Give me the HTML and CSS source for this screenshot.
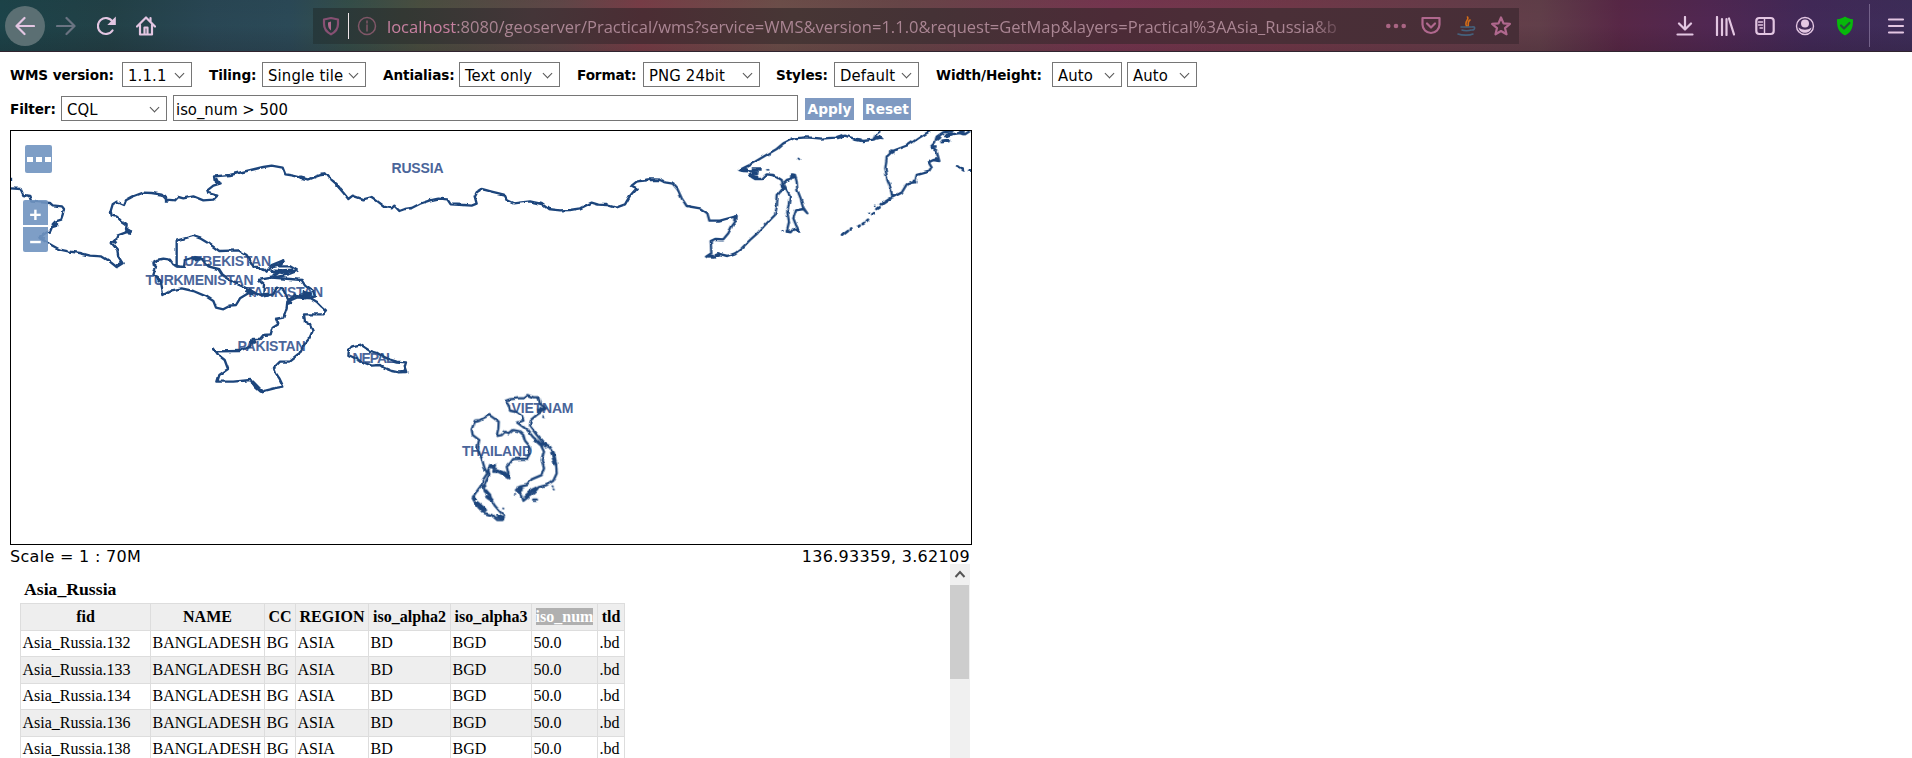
FILE: index.html
```html
<!DOCTYPE html>
<html lang="en">
<head>
<meta charset="utf-8">
<title>OpenLayers map preview</title>
<link rel="stylesheet" href="styles.css">
</head>
<body>
<header class="chrome">
  <nav class="nav">
    <span class="back"><svg class="icon" viewBox="0 0 20 20"><path d="M19 10H2M9.500 2L1.500 10l8 8" /></svg></span>
    <svg class="icon forward" viewBox="0 0 20 20"><path d="M1 10h17M10.500 2l8 8-8 8"/></svg>
    <svg class="icon reload" viewBox="0 0 20 20"><path d="M15.500 14.500A8 8 0 1 1 15.500 5.500"/><path class="solid" d="M18.800 0.500v8.500h-8.500z"/></svg>
    <svg class="icon home" viewBox="0 0 20 20"><path d="M1 10.500L10 1.500l9 9M4 9v9.500h12V9"/><path d="M8.500 18v-6.500h3V18M14.500 2v3"/></svg>
  </nav>
  <div class="urlbar">
    <svg class="icon shield" viewBox="0 0 20 20"><path d="M3 3.500L10 2l7 1.500V8c0 5-2.500 8-7 10.300C5.500 16 3 13 3 8z"/><path class="solid" d="M7 6.500l3-1v9c-2-1.500-3-3.500-3-6z"/></svg>
    <span class="caret"></span>
    <svg class="icon info" viewBox="0 0 20 20"><circle cx="10" cy="10" r="8.500"/><path d="M10 9v6M10 5v2"/></svg>
    <span class="url"><span class="host">localhost</span>:8080/geoserver/Practical/wms?service=WMS&amp;version=1.1.0&amp;request=GetMap&amp;layers=Practical%3AAsia_Russia&amp;b</span>
    <svg class="icon dots" viewBox="0 0 20 20"><circle cx="2.300" cy="10" r="2.300"/><circle cx="10" cy="10" r="2.300"/><circle cx="17.700" cy="10" r="2.300"/></svg>
    <svg class="icon pocket" viewBox="0 0 20 20"><path d="M1.500 2h17v6.500a8.500 8.500 0 0 1-17 0z"/><path d="M6 7.500l4 4 4-4"/></svg>
    <svg class="icon java" viewBox="0 0 20 20"><path class="flame" d="M10.500 1c2 3-3.500 4-1 9M13 4c-3 2-1 3-2 6"/><path class="cup" d="M4 11h11M5 14c2 1 7 1 9 0M1 18c4 1.500 12 1.500 15 0M15 11c4-1 3 3 0 3"/></svg>
    <svg class="icon star" viewBox="0 0 20 20"><path d="M10 1.500l2.500 5.900 6.400.5-4.900 4.200 1.500 6.200L10 15l-5.500 3.300L6 12.100 1.100 7.900l6.400-.5z"/></svg>
  </div>
  <nav class="tools">
    <svg class="icon" viewBox="0 0 20 20"><path d="M10 1v12M4 7.500l6 6 6-6M2.500 18.500h15"/></svg>
    <svg class="icon" viewBox="0 0 20 20"><path d="M2 1v18M7 3v16M11.500 3v16M14 2.500l5 16"/></svg>
    <svg class="icon" viewBox="0 0 20 20"><rect x="1.300" y="2" width="17.400" height="16" rx="3"/><path class="thin" d="M9.500 2v16M3.500 6h4M3.500 9h4M5 12h2.500"/></svg>
    <svg class="icon" viewBox="0 0 20 20"><circle class="thin" cx="10" cy="10" r="8.500"/><circle class="solid" cx="10" cy="7.500" r="4"/><path class="solid" d="M3.500 11.500c4 3 9 3 13 0-1 7-12 7-13 0z"/></svg>
    <svg class="icon guard" viewBox="0 0 20 20"><path class="leaf" d="M10 .5c2 1.500 5 2.500 8 2.700 0 7-.5 12.500-8 16.300C2.500 15.700 2 10 2 3.200c3-.2 6-1.200 8-2.700z"/><path class="tick" d="M6 9.500l3 3 5.500-5.500"/></svg>
    <span class="divider"></span>
    <svg class="icon" viewBox="0 0 20 20"><path d="M3 3.500h14M3 10h14M3 16.500h14"/></svg>
  </nav>
</header>

<main class="page">
  <form class="row options">
    <label class="w-version">WMS version:</label><span class="select s-version">1.1.1</span>
    <label class="w-tiling">Tiling:</label><span class="select s-tiling">Single tile</span>
    <label class="w-alias">Antialias:</label><span class="select s-alias">Text only</span>
    <label class="w-format">Format:</label><span class="select s-format">PNG 24bit</span>
    <label class="w-styles">Styles:</label><span class="select s-styles">Default</span>
    <label class="w-size">Width/Height:</label><span class="select s-auto">Auto</span><span class="select s-auto second">Auto</span>
  </form>
  <form class="row filter">
    <label class="w-filter">Filter:</label><span class="select s-filter">CQL</span>
    <span class="query">iso_num &gt; 500</span>
    <a class="button apply">Apply</a><a class="button reset">Reset</a>
  </form>

  <section class="map">
    <svg class="layer" viewBox="11 131 960 413">
      <defs>
        <filter id="coast" filterUnits="userSpaceOnUse" x="11" y="131" width="960" height="413">
          <feTurbulence type="fractalNoise" baseFrequency="0.15" numOctaves="1" seed="4" result="noise"/>
          <feDisplacementMap in="SourceGraphic" in2="noise" scale="3.500" xChannelSelector="R" yChannelSelector="G"/>
        </filter>
      </defs>
      <g class="names">
        <text x="391.500" y="173" textLength="52">RUSSIA</text>
        <text x="184" y="266" textLength="87">UZBEKISTAN</text>
        <text x="145.500" y="284.500" textLength="108">TURKMENISTAN</text>
        <text x="246" y="296.500" textLength="77">TAJIKISTAN</text>
        <text x="237.500" y="350.500" textLength="68">PAKISTAN</text>
        <text x="352.500" y="362.500" textLength="42">NEPAL</text>
        <text x="511.500" y="412.500" textLength="62">VIETNAM</text>
        <text x="462" y="456" textLength="70">THAILAND</text>
      </g>
      <g filter="url(#coast)">
      <g class="border" transform="translate(0 125) scale(.33333)">
        <path d="M33 158v10M33 190L62 192 70 210 88 213 94 230 150 234 158 241 186 244 192 252 188 272 184 284 165 290 158 298 172 302 156 306 150 320 140 322 118 338 140 352 158 362 180 374 205 379 240 384 270 392 305 394 322 404 350 426 368 415 355 395 352 375 335 354 348 342 352 332 378 322 392 322 378 312 380 300 365 290 352 276 335 272 332 258 338 238 350 230 372 240 378 226 400 214 430 203 455 204 485 209 500 224 525 226 535 216 550 220 580 214 610 226 640 224 652 212 625 204 622 196 640 182 662 175 645 172 642 154 690 150 740 138 790 126 815 122 848 128 856 148 880 152 905 158 925 164 950 154 975 146 985 158 1005 172 1020 190"/>
        <path class="clump" d="M120 338l14 4M160 298l14 2M376 316l16 6M342 354l6-6M646 160l6 12 8 2M500 222v8M900 156l14 4M962 148l14-1"/>
        <path d="M530 424V347L580 333 600 340 630 358 658 378 715 376 740 390 752 410 762 428 790 430 800 440 815 420 850 406 838 424 870 424 893 437 870 446 850 452 815 458 775 465 792 480 790 505 780 512 745 492"/>
        <path d="M530 424L552 426 555 405 585 396 605 402 625 424 655 432 668 452 700 472 745 492 765 505"/>
        <path d="M455 414L470 405 490 401 510 404 520 418 540 426M455 414L468 425 460 450 482 468 486 488 490 510 515 496 545 490 580 498 620 515 640 528 648 548 670 553 690 542 708 540 720 520 745 505 765 505"/>
        <path d="M815 458L870 462 905 465 915 482 940 500 945 515 915 520 885 512 865 525 850 495 830 488 820 508 790 514 780 512"/>
        <path class="clump" d="M808 438l30 2 30 6M815 425l25-6 12-12M820 452l20-14 40-2M466 455l14 14M735 494l25 14M785 510l25-2M880 510l50 8M905 502l30 6M578 400l24 2M868 528l4 10"/>
        <path d="M641 671L650 679 720 678 750 665 758 642 780 642 790 630 812 628 818 608 835 598 828 582 850 578 860 548 862 530 890 518 930 518 950 530 965 545 978 556 968 568 912 568 915 590 930 600 938 618 928 640 912 660 895 690 870 710 840 710 822 728 828 745 838 760 850 785 820 790 782 800 765 785 752 765 700 770 652 770 658 750 684 732 674 705 655 690Z"/>
        <path class="clump" d="M756 770l20 20 12 10M752 655l16-6"/>
      </g>
      <g class="border" transform="translate(330 125) scale(.33333)">
        <path d="M0 163L20 180 40 203 55 222 68 212 100 223 125 216 140 227 165 246 185 250 193 242 208 258 225 252 245 249 270 236 300 226 325 221 352 223 362 238 400 240 425 242 440 236 434 214 440 202 455 192 485 200 522 209 530 226 550 235 600 229 635 237 655 252 690 256 720 255 750 250 785 233 805 239 830 240 858 248 885 238 900 212 920 190 905 182 920 170 955 163 990 164"/>
        <path d="M55 690L57 675 66 664 90 659 105 668 120 678 142 684 160 695 180 704 200 710 228 712 224 726 229 741 205 742 185 738 160 728 150 720 125 722 105 714 85 705 68 696Z"/>
      </g>
      <g class="border" transform="translate(640 125) scale(.33333)">
        <path d="M0 168L20 165 60 165 75 172 98 176 112 192 125 220 140 243 180 250 202 265 208 287 240 287 290 273 288 287 275 305 265 325 250 343 225 342 212 348 214 385 198 395 222 398 232 385 262 393 285 385 305 370 330 345 352 325 375 300 405 270 411 240 413 210 425 195 432 190 425 165 400 150 380 148 365 162 345 162 330 152 350 140 310 138 298 135 325 122 370 95 410 72 430 55 460 40 500 37 545 41 585 38 615 32 640 40 670 48 700 44 708 28 720 18M700 44L712 36 730 40"/>
        <path class="clump" d="M302 135l20-3M335 132h30M335 142l20 4M335 154l22 6M425 175l8 20M200 396l20-2M225 390l14-4M640 42l24 4M702 40l22-4M590 38l14-4M600 30l8 8M285 275v14M456 148l6 12M443 312v10M468 312l10 6"/>
        <path d="M438 190L450 212 446 240 442 262 447 290 440 320 452 322 460 312 478 320 468 300 460 280 468 256 490 252 502 265 490 248 482 220 472 195 470 170 465 150 455 148 452 162 440 165 430 175Z"/>
        <path d="M870 18L835 40 805 60 765 75 740 98 736 130 742 165 752 190 757 217 785 203 800 178 825 170 830 150 868 140 875 128 866 112 880 105 898 108 890 80 872 66 885 52 890 35 910 22 940 18M905 48L930 46M912 34L935 28 960 24 975 28 990 18"/>
        <path class="clump" d="M750 78l14 2M818 170h14M884 100l12 6M876 66h14M904 50l24-4M915 32l24-6M958 18l14 10M890 44l10-8"/>
        <path class="islands" d="M752 220l-24 16M722 238l6-4M712 252l7-5M697 268l6-4M680 288l4-4M668 297l5-3M655 305l4-3M632 314l2-4M624 318l-18 14M952 124l16 12M988 137l6-1"/>
        <path class="specks" d="M475 100l3 3M384 137l2 1M427 317l2 1M705 243l2 1M687 262l2 0"/>
      </g>
      <g class="border" transform="translate(440 380) scale(.33333)">
        <path d="M95 148L105 122 120 120 148 105 162 115 176 125 175 145 170 168 185 165 195 155 208 160 220 150 238 154 250 165 255 182 270 200 268 220 263 236 220 237 210 250 200 260 205 280 205 295 192 285 175 275 160 275 165 255 150 255 145 270 148 285 140 300 130 320 135 335 150 345 155 362 165 378 180 395 192 408 188 420 172 420 155 405 130 398 112 378 98 355 110 335 122 318 130 298 142 280 133 262 125 235 112 205 118 180 98 165Z"/>
        <path d="M197 62L210 58 235 55 250 55 262 45 280 52 295 52 300 72 318 85 305 95 290 105 272 120 270 138 290 165 310 188 330 200 342 220 348 250 350 280 340 302 320 315 295 322 280 340 250 362 245 345 228 330 240 320 262 315 275 298 305 285 312 265 305 240 312 215 300 190 280 172 262 150 232 128 250 122 245 108 225 95 210 92 205 75Z"/>
        <path class="clump" d="M100 345l8 14M108 366l20 16 10 12M116 380l16 8M135 330l14 16M140 350l18 12M168 408l20 8M230 325h18M234 334h10M255 352l20-20 16-8M275 332h14M292 92l22-4M298 84l12 8M285 178l16 14 20 6M150 258l12 4M165 268l30 12 8 12M128 312l8 10M335 215l12 40"/>
        <path class="islands" d="M280 359h10"/>
        <path class="specks" d="M309 111l4 1M189 385l2 1M224 344l2 1M337 318l2 2M340 327l2 2"/>
      </g>
      </g>
    </svg>
    <span class="control more"><i></i><i></i><i></i></span>
    <span class="control zoom-in">+</span>
    <span class="control zoom-out">−</span>
  </section>
  <div class="status"><span class="scale">Scale = 1 : 70M</span><span class="coords">136.93359, 3.62109</span></div>

  <section class="info-frame">
    <table class="features">
      <caption>Asia_Russia</caption>
      <colgroup><col class="c-fid"><col class="c-name"><col class="c-cc"><col class="c-region"><col class="c-a2"><col class="c-a3"><col class="c-num"><col class="c-tld"></colgroup>
      <thead><tr><th>fid</th><th>NAME</th><th>CC</th><th>REGION</th><th>iso_alpha2</th><th>iso_alpha3</th><th><mark>iso_num</mark></th><th>tld</th></tr></thead>
      <tbody>
        <tr><td>Asia_Russia.132</td><td>BANGLADESH</td><td>BG</td><td>ASIA</td><td>BD</td><td>BGD</td><td>50.0</td><td>.bd</td></tr>
        <tr><td>Asia_Russia.133</td><td>BANGLADESH</td><td>BG</td><td>ASIA</td><td>BD</td><td>BGD</td><td>50.0</td><td>.bd</td></tr>
        <tr><td>Asia_Russia.134</td><td>BANGLADESH</td><td>BG</td><td>ASIA</td><td>BD</td><td>BGD</td><td>50.0</td><td>.bd</td></tr>
        <tr><td>Asia_Russia.136</td><td>BANGLADESH</td><td>BG</td><td>ASIA</td><td>BD</td><td>BGD</td><td>50.0</td><td>.bd</td></tr>
        <tr><td>Asia_Russia.138</td><td>BANGLADESH</td><td>BG</td><td>ASIA</td><td>BD</td><td>BGD</td><td>50.0</td><td>.bd</td></tr>
      </tbody>
    </table>
    <div class="scrollbar">
      <svg class="up" viewBox="0 0 20 21"><path d="M5.500 13L10 8l4.500 5"/></svg>
      <span class="thumb"></span>
    </div>
  </section>
</main>
</body>
</html>
```
FILE: styles.css
```css
* { box-sizing: border-box; }
html, body { height: 100%; }
body {
  margin: 0;
  overflow: hidden;
  background: #fff;
  color: #000;
  font-family: "DejaVu Sans", Verdana, sans-serif;
}

/* browser toolbar */
.chrome {
  display: flex;
  align-items: center;
  height: 52px;
  border-bottom: 1px solid #30242f;
  background:
    linear-gradient(180deg, rgba(0, 0, 0, .05), rgba(0, 0, 0, .02) 50%, rgba(20, 10, 15, .16)),
    linear-gradient(90deg, #1d454b 0, #234248 110px, #2a4856 210px, #2c4b59 290px, #36504b 350px, #4c5142 420px, #63494a 560px, #7b3f49 640px, #70514c 780px, #6b484a 900px, #793752 1110px, #743a4b 1290px, #63404b 1540px, #5a2848 1620px, #522854 1710px, #432a5a 1810px, #3f2e5b 1912px);
}
.icon {
  flex: none;
  width: 20px;
  height: 20px;
  fill: none;
  stroke: #e3c6e2;
  stroke-width: 2.200;
  stroke-linecap: round;
  stroke-linejoin: round;
}
.icon .solid { fill: #e3c6e2; stroke: none; }
.icon .thin { stroke-width: 1.400; }
.nav { display: flex; align-items: center; width: 313px; padding-left: 5px; }
.back {
  display: flex;
  align-items: center;
  justify-content: center;
  width: 40px;
  height: 40px;
  border-radius: 50%;
  background: #5b6f73;
}
.forward { margin-left: 11px; opacity: .38; }
.reload { margin-left: 21px; }
.home { margin-left: 19px; }
.urlbar {
  display: flex;
  align-items: center;
  width: 1206px;
  height: 36px;
  padding-left: 8px;
  background: linear-gradient(90deg, #26393c 0, #333833 90px, #443538 220px, #4b2d34 330px, #473635 480px, #453236 620px, #4c2b37 800px, #4a2f37 960px, #472e37 1206px);
}
.urlbar .icon { stroke: #b0688e; }
.urlbar .icon .solid { fill: #b0688e; }
.urlbar .shield { stroke: #875073; }
.caret { width: 1px; height: 26px; margin: 0 8px 0 7px; background: #efe6ea; }
.urlbar .info { stroke: #805768; stroke-width: 1.500; }
.url {
  width: 954px;
  margin-left: 10px;
  padding-top: 3px;
  white-space: nowrap;
  font: 16.550px/28px "Open Sans", "Noto Sans", sans-serif;
  color: #aa8593;
  -webkit-mask-image: linear-gradient(90deg, #000 925px, transparent 962px);
  mask-image: linear-gradient(90deg, #000 925px, transparent 962px);
}
.host { color: #c780a0; }
.dots { margin-left: 45px; }
.urlbar .dots { fill: #a96583; stroke: none; }
.pocket { margin-left: 15px; }
.java { margin-left: 16px; }
.urlbar .java { stroke-width: 1.600; }
.java .flame { stroke: #d46d18; }
.java .cup { stroke: #45617c; }
.star { margin-left: 14px; }
.tools { display: flex; align-items: center; gap: 20px; margin-left: 156px; }
.guard .leaf { fill: #07b80b; stroke: none; }
.guard .tick { stroke: #25503a; }
.divider { width: 1px; height: 43px; margin-left: -6px; margin-right: -4px; background: #74628a; }

/* controls above the map */
.page { padding: 10px 10px 0; }
.row { display: flex; align-items: center; }
.options { height: 25px; }
.filter { height: 26px; margin-top: 8px; }
.row label { font-size: 13.600px; font-weight: bold; letter-spacing: -.1px; white-space: nowrap; }
.filter label { padding-top: 1px; }
.select {
  position: relative;
  height: 25px;
  padding-left: 5px;
  border: 1px solid #767676;
  font-family: "DejaVu Sans Condensed", Tahoma, sans-serif;
  font-size: 16.500px;
  letter-spacing: .15px;
  line-height: 25px;
  white-space: nowrap;
}
.select::after {
  content: "";
  position: absolute;
  top: 7px;
  right: 8px;
  width: 6px;
  height: 6px;
  border: solid #555;
  border-width: 0 1px 1px 0;
  transform: rotate(45deg);
}
.w-version { width: 112px; }
.w-tiling, .w-alias, .w-format, .w-styles, .w-size { margin-left: 17px; }
.w-tiling { width: 53px; }
.w-alias { width: 76px; }
.w-format { width: 66px; }
.w-styles { width: 58px; margin-left: 16px; }
.w-size { width: 116px; }
.w-filter { width: 51px; }
.s-version { width: 70px; }
.s-tiling { width: 104px; }
.s-alias { width: 101px; }
.s-format { width: 117px; }
.s-styles { width: 85px; }
.s-auto { width: 70px; }
.second { margin-left: 5px; }
.s-filter { width: 106px; }
.query {
  width: 625px;
  height: 26px;
  margin-left: 6px;
  padding-left: 2px;
  border: 1px solid #767676;
  font-family: "DejaVu Sans Condensed", Tahoma, sans-serif;
  font-size: 16.500px;
  line-height: 27px;
}
.button {
  height: 22px;
  margin-top: 1px;
  background: #7f9ac2;
  color: #fff;
  font-size: 13.700px;
  font-weight: bold;
  line-height: 23px;
  text-align: center;
}
.apply { width: 49px; margin-left: 7px; }
.reset { width: 48px; margin-left: 9px; }

/* map */
.map {
  position: relative;
  width: 962px;
  height: 415px;
  margin-top: 9px;
  border: 1px solid #000;
}
.layer { display: block; width: 960px; height: 413px; }
.border {
  fill: none;
  stroke: #1c457c;
  stroke-width: 7;
  stroke-linejoin: round;
}
.border .islands { stroke-width: 8; stroke-linecap: round; }
.border .clump { stroke-width: 11; }
.border .specks { stroke-width: 5; stroke-linecap: round; }
.names { fill: #4a659a; font: bold 14px "Liberation Sans", Arial, sans-serif; }
.control {
  position: absolute;
  display: flex;
  align-items: center;
  justify-content: center;
  width: 25px;
  height: 25px;
  background: rgba(112, 147, 192, .9);
  color: #fff;
  font: bold 21px/25px "Liberation Sans", Arial, sans-serif;
}
.more { left: 14px; top: 14px; width: 27px; height: 28px; gap: 3px; border-radius: 2px; }
.more i { width: 6px; height: 5px; background: #fff; }
.zoom-in { left: 12px; top: 69px; padding-top: 3px; border-radius: 2px 2px 0 0; }
.zoom-out { left: 12px; top: 96px; padding-top: 3px; border-radius: 0 0 2px 2px; }
.status {
  display: flex;
  justify-content: space-between;
  width: 960px;
  height: 19px;
  font-size: 16px;
  line-height: 23px;
  letter-spacing: .3px;
}

/* feature info */
.info-frame {
  display: flex;
  justify-content: space-between;
  width: 960px;
  height: 194px;
  overflow: hidden;
  font-family: "Liberation Serif", "Times New Roman", serif;
  font-size: 16px;
}
.features {
  align-self: flex-start;
  width: 604px;
  margin: 12px 0 0 10px;
  border-collapse: collapse;
  table-layout: fixed;
}
.features caption { height: 27px; padding-left: 4px; font-size: 17.700px; font-weight: bold; line-height: 26px; text-align: left; }
.features th, .features td { height: 26.500px; padding: 0 2px 0 2px; border: 1px solid #ddd; line-height: 20px; white-space: nowrap; }
.features td { padding-left: 1.500px; text-align: left; }
.features th { background: #eee; text-align: center; }
.features tbody tr:nth-child(even) { background: #eee; }
.c-fid { width: 130px; }
.c-name { width: 114px; }
.c-cc { width: 31px; }
.c-region { width: 73px; }
.c-a2 { width: 82px; }
.c-a3 { width: 81px; }
.c-num { width: 66px; }
.c-tld { width: 27px; }
mark { background: #b0b0b0; color: #fff; }
.scrollbar { width: 20px; height: 194px; background: #f0f0f0; }
.up { display: block; width: 20px; height: 21px; fill: none; stroke: #555; stroke-width: 2; }
.thumb { display: block; width: 19px; height: 94px; background: #cdcdcd; }
```
